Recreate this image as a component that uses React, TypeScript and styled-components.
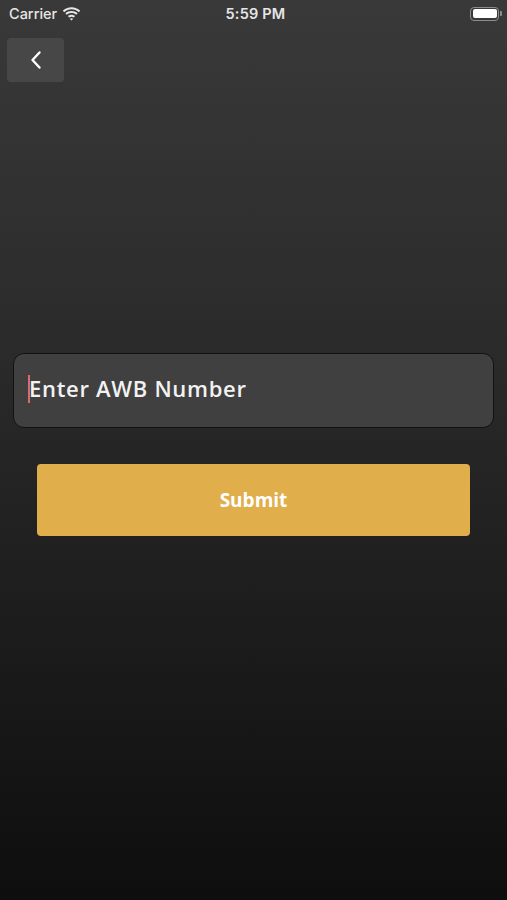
import React, { useState } from "react";
import styled, { createGlobalStyle } from "styled-components";

const GlobalStyle = createGlobalStyle`
  html, body {
    margin: 0;
    padding: 0;
    background: #0e0e0e;
  }
  * {
    box-sizing: border-box;
  }
`;

const Screen = styled.div`
  width: 507px;
  height: 900px;
  display: flex;
  flex-direction: column;
  background: linear-gradient(180deg, #3a393a 0%, #2a2a2a 40%, #1c1c1c 70%, #0e0e0e 100%);
  font-family: "Open Sans", "Liberation Sans", sans-serif;
  overflow: hidden;
`;

const StatusBar = styled.div`
  height: 27px;
  display: grid;
  grid-template-columns: 1fr auto 1fr;
  align-items: center;
  padding: 0 5px 0 9px;
  color: #e6e6e6;
  font-family: Inter, "Liberation Sans", sans-serif;
  font-size: 14.5px;
  font-weight: 500;
`;

const Carrier = styled.div`
  display: flex;
  align-items: center;
  gap: 5px;
`;

const Clock = styled.div`
  font-weight: 600;
  letter-spacing: 0.2px;
`;

const Battery = styled.div`
  justify-self: end;
  display: flex;
  align-items: center;
  gap: 1px;
`;

const BatteryBody = styled.div`
  width: 29px;
  height: 14px;
  border: 1.5px solid #8c8c8c;
  border-radius: 4px;
  padding: 1.5px;
  display: flex;
`;

const BatteryFill = styled.div`
  flex: 1;
  background: #ffffff;
  border-radius: 2px;
`;

const BatteryNub = styled.div`
  width: 2px;
  height: 5px;
  background: #8c8c8c;
  border-radius: 0 1px 1px 0;
`;

const NavRow = styled.div`
  padding: 11px 7px 0;
`;

const BackButton = styled.button`
  width: 57px;
  height: 44px;
  border: none;
  border-radius: 4px;
  background: #474747;
  display: flex;
  align-items: center;
  justify-content: center;
  padding: 0;
  cursor: pointer;
`;

const Form = styled.div`
  display: flex;
  flex-direction: column;
  align-items: center;
  padding: 271px 13px 0;
  gap: 36px;
`;

const InputBox = styled.label`
  width: 100%;
  height: 75px;
  background: #404040;
  border: 1.5px solid #121212;
  border-radius: 11px;
  display: flex;
  align-items: center;
  padding: 0 14px 3px;
`;

const Caret = styled.span`
  width: 2px;
  height: 28px;
  background: #d96b6b;
  margin-right: -1px;
  flex-shrink: 0;
`;

const Field = styled.input`
  flex: 1;
  min-width: 0;
  height: 32px;
  border: none;
  background: transparent;
  outline: none;
  color: #ffffff;
  font-family: "Open Sans", "Liberation Sans", sans-serif;
  font-size: 22px;
  font-weight: 600;
  letter-spacing: 0.7px;
  padding: 0 0 3px;
  caret-color: transparent;
  &::placeholder {
    color: #f2f2f2;
    opacity: 1;
  }
`;

const SubmitButton = styled.button`
  width: 433px;
  height: 72px;
  border: none;
  border-radius: 4px;
  background: #e0ae4a;
  color: #ffffff;
  font-family: "Open Sans", "Liberation Sans", sans-serif;
  font-size: 19px;
  font-weight: 700;
  cursor: pointer;
`;

const WifiIcon = () => (
  <svg width="19" height="14" viewBox="0 0 17 13" fill="#e6e6e6">
    <path d="M8.5 2.2c2.6 0 5 1 6.8 2.7l1.3-1.4C14.5 1.4 11.6.2 8.5.2S2.5 1.4.4 3.5l1.3 1.4C3.5 3.2 5.9 2.2 8.5 2.2z" />
    <path d="M8.5 5.6c1.7 0 3.2.6 4.4 1.7l1.3-1.4C12.7 4.5 10.7 3.7 8.5 3.7S4.3 4.5 2.8 5.9l1.3 1.4c1.2-1.1 2.7-1.700 4.4-1.7z" />
    <path d="M8.5 9c.8 0 1.5.3 2 .8l1.4-1.4C11 7.6 9.8 7.1 8.5 7.1S6 7.6 5.1 8.4l1.4 1.4c.5-.5 1.2-.8 2-.8z" />
    <path d="M8.5 12.6l1.6-1.6c-.4-.4-1-.6-1.6-.6s-1.2.2-1.6.6z" />
  </svg>
);

const ChevronLeft = () => (
  <svg width="14" height="20" viewBox="0 0 14 20" fill="none">
    <path d="M10.5 2.5L3.5 10l7 7.5" stroke="#ffffff" strokeWidth="2.4" strokeLinecap="round" strokeLinejoin="round" />
  </svg>
);

export default function App() {
  const [awb, setAwb] = useState("");
  return (
    <>
      <GlobalStyle />
      <Screen>
        <StatusBar>
          <Carrier>
            Carrier
            <WifiIcon />
          </Carrier>
          <Clock>5:59 PM</Clock>
          <Battery>
            <BatteryBody>
              <BatteryFill />
            </BatteryBody>
            <BatteryNub />
          </Battery>
        </StatusBar>
        <NavRow>
          <BackButton aria-label="Back">
            <ChevronLeft />
          </BackButton>
        </NavRow>
        <Form>
          <InputBox>
            <Caret />
            <Field
              value={awb}
              onChange={(e) => setAwb(e.target.value)}
              placeholder="Enter AWB Number"
            />
          </InputBox>
          <SubmitButton>Submit</SubmitButton>
        </Form>
      </Screen>
    </>
  );
}
